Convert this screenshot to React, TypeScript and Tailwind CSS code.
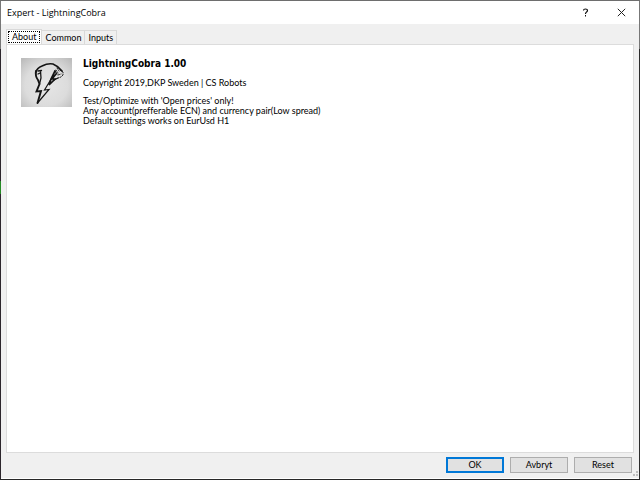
import { useState } from "react";

const tabs = ["About", "Common", "Inputs"];

function CobraLogo() {
  return (
    <svg
      viewBox="0 0 51 49"
      className="h-[49px] w-[51px] shrink-0"
      role="img"
      aria-label="LightningCobra logo"
    >
      <defs>
        <radialGradient id="logo-bg" cx="50%" cy="55%" r="70%">
          <stop offset="0" stopColor="#e6e6e6" />
          <stop offset="0.6" stopColor="#dcdcdc" />
          <stop offset="1" stopColor="#bdbdbd" />
        </radialGradient>
      </defs>
      <rect width="51" height="49" fill="url(#logo-bg)" />
      <g fill="none" stroke="#141414" strokeLinejoin="miter" strokeLinecap="round">
        <path d="M15 14 Q16 10 21 8 Q27 5 32 6 Q37 8 41 13" strokeWidth="1.7" />
        <path d="M15 13 Q14 18 17 22 L18.5 26 L15.5 33.5 L20 33 L16.5 45" strokeWidth="1.9" />
        <path d="M16.5 45 L28 31.5 L23.5 32 L32 18" strokeWidth="1.2" />
        <path d="M19.5 13 L20 20 L18.5 26 M17 13 L20.5 12.5 M17 16 L19 15" strokeWidth="1.3" />
        <path d="M34 13 L30 21 L28 27 L34 21 L31 21 L35 16" strokeWidth="1.7" />
        <path d="M33 22 L37 20 M34 13 L36 16" strokeWidth="1.2" />
        <path d="M36 10 L38 13 M35 12 L37 15 M39 12 L42 14 L42 17 L40 19 L37 20 M37 17 L40 16" strokeWidth="0.9" strokeDasharray="1.6 1.4" />
      </g>
    </svg>
  );
}

function DialogButton({ label, primary = false }: { label: string; primary?: boolean }) {
  return (
    <button
      type="button"
      className={
        primary
          ? "h-4 w-[58px] border-2 border-[#0078d7] bg-[#e1e1e1] leading-3"
          : "h-4 w-[58px] border border-[#adadad] bg-[#e1e1e1] leading-[14px]"
      }
    >
      {label}
    </button>
  );
}

export default function App() {
  const [active, setActive] = useState("About");

  return (
    <div className="flex min-h-screen flex-col border-y border-t-[#6e6e6e] border-b-[#272727] bg-[#f0f0f0] font-[Lato,'Liberation_Sans',sans-serif] text-[9px] text-black [font-variant-ligatures:none]">
      <div className="flex grow">
        <div className="flex w-px flex-col bg-[#2c262c]">
          <div className="h-12 bg-[#777777]" />
          <div className="mt-[132px] h-[13px] bg-[#258a25]" />
        </div>
        <div className="flex min-w-0 grow flex-col border-b border-white">
          <header className="flex h-[23px] items-center justify-between bg-white pl-1.5">
            <h1 className="font-['Open_Sans','Noto_Sans',sans-serif] text-[9px] leading-3">Expert - LightningCobra</h1>
            <div className="flex">
              <button type="button" aria-label="Help" className="flex h-5 w-9 items-center justify-center">
                <svg viewBox="0 0 7 9" className="h-[9px] w-[7px]" aria-hidden="true">
                  <path d="M1.5 2.5 Q1.5 1 3.5 1 Q5.5 1 5.5 2.5 Q5.5 3.5 4.3 4.2 Q3.5 4.7 3.5 6" fill="none" stroke="#111" strokeWidth="1.2" />
                  <rect x="3" y="7" width="1" height="1.5" fill="#111" />
                </svg>
              </button>
              <button type="button" aria-label="Close" className="flex h-5 w-9 items-center justify-center">
                <svg viewBox="0 0 9 9" className="size-[9px]" aria-hidden="true">
                  <path d="M0.8 0.8 L8.2 8.2 M8.2 0.8 L0.8 8.2" fill="none" stroke="#222" strokeWidth="1" />
                </svg>
              </button>
            </div>
          </header>

          <main className="flex grow flex-col px-[5px] pt-[5px]">
            <div role="tablist" className="flex items-end">
              {tabs.map((tab) => (
                <button
                  key={tab}
                  type="button"
                  role="tab"
                  id={`tab-${tab}`}
                  aria-selected={active === tab}
                  aria-controls="tab-panel"
                  onClick={() => setActive(tab)}
                  className={
                    active === tab
                      ? "h-[15px] border border-b-0 border-[#d9d9d9] bg-white p-px"
                      : "h-3.5 border border-b-0 border-l-0 border-[#d9d9d9] px-[3px] leading-[14px]"
                  }
                >
                  <span className={active === tab ? "block h-3 border border-dotted border-black px-[3px] leading-[10px]" : ""}>
                    {tab}
                  </span>
                </button>
              ))}
            </div>
            <section
              id="tab-panel"
              role="tabpanel"
              aria-labelledby={`tab-${active}`}
              className="flex grow items-start gap-[11px] border border-[#dcdcdc] bg-white px-3.5 pt-[13px]"
            >
              <CobraLogo />
              <div className="leading-[10px]">
                <h2 className="font-['DejaVu_Sans_Condensed','DejaVu_Sans',sans-serif] text-[10px] leading-3 font-bold">LightningCobra 1.00</h2>
                <p className="mt-2">Copyright 2019,DKP Sweden | CS Robots</p>
                <p className="mt-2">Test/Optimize with 'Open prices' only!</p>
                <p>Any account(prefferable ECN) and currency pair(Low spread)</p>
                <p>Default settings works on EurUsd H1</p>
              </div>
            </section>
          </main>

          <footer className="flex h-[25px] justify-end gap-1.5 pt-1">
            <DialogButton label="OK" primary />
            <DialogButton label="Avbryt" />
            <div className="flex">
              <DialogButton label="Reset" />
              <svg viewBox="0 0 7 20" className="h-5 w-[7px]" aria-hidden="true">
                <path d="M4 14h2v2h-2z M1 17h2v2h-2z M4 17h2v2h-2z" fill="#bdbdbd" />
              </svg>
            </div>
          </footer>
        </div>
        <div className="flex w-px flex-col bg-[#2c2c2c]">
          <div className="h-12 bg-[#777777]" />
        </div>
      </div>
    </div>
  );
}
